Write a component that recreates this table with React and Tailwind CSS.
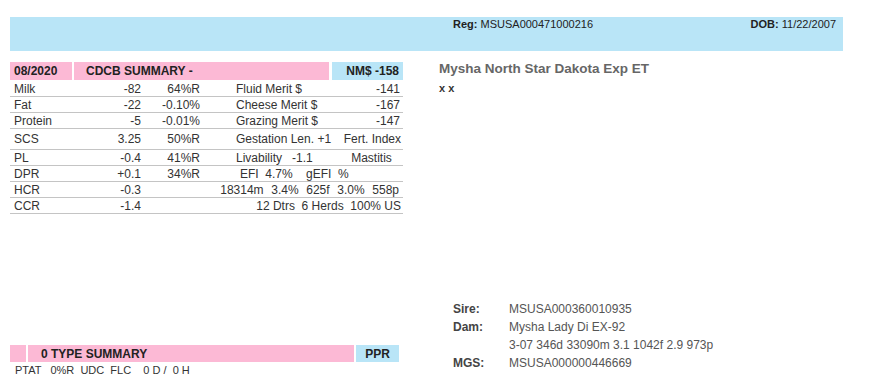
const font = { fontFamily: '"Liberation Sans", Arial, sans-serif' };

const rows = [
  { label: 'Milk', val: '-82', pct: '64%R', name: 'Fluid Merit $', nval: '-141' },
  { label: 'Fat', val: '-22', pct: '-0.10%', name: 'Cheese Merit $', nval: '-167' },
  { label: 'Protein', val: '-5', pct: '-0.01%', name: 'Grazing Merit $', nval: '-147' },
];

function Row({ label, val, pct, children, tall }) {
  return (
    <div
      className={`flex items-center border-b border-[#c4c4c4] ${
        tall ? 'h-[21px]' : 'h-[16px]'
      }`}
    >
      <span className="w-[75px] pl-[4px]">{label}</span>
      <span className="w-[56px] text-right">{val}</span>
      <span className="w-[59px] text-right">{pct}</span>
      {children}
    </div>
  );
}

export default function App() {
  return (
    <div className="w-[878px] h-[376px] bg-white text-[#333] overflow-hidden" style={font}>
      <div className="h-[17px]" />
      <div className="ml-[10px] w-[833px] h-[34px] bg-[#b9e5f7] flex items-start justify-between pl-[443px] pr-[7px] text-[11px] leading-[13px] pt-[1px] text-[#222]">
        <span>
          <b>Reg:</b> MSUSA000471000216
        </span>
        <span>
          <b>DOB:</b> 11/22/2007
        </span>
      </div>

      <div className="flex h-[316px] mt-[11px]">
        {/* left column */}
        <div className="ml-[10px] w-[393px] flex flex-col text-[12px]">
          <div className="flex h-[18px] items-center font-bold text-[#222]">
            <div className="w-[62px] h-full bg-[#fcb9d5] pl-[4px] flex items-center">08/2020</div>
            <div className="ml-[2px] w-[255px] h-full bg-[#fcb9d5] pl-[12px] flex items-center">
              CDCB SUMMARY -
            </div>
            <div className="ml-[3px] flex-1 h-full bg-[#b9e5f7] pr-[4px] flex items-center justify-end">
              NM$ -158
            </div>
          </div>
          <div className="mt-[1px]">
            {rows.map((r) => (
              <Row key={r.label} {...r}>
                <span className="w-[140px] pl-[36px]">{r.name}</span>
                <span className="flex-1 text-right pr-[3px]">{r.nval}</span>
              </Row>
            ))}
            <Row label="SCS" val="3.25" pct="50%R" tall>
              <span className="w-[140px] pl-[36px] whitespace-nowrap">Gestation Len. +1</span>
              <span className="flex-1 text-right pr-[2px] whitespace-nowrap">Fert. Index</span>
            </Row>
            <Row label="PL" val="-0.4" pct="41%R">
              <span className="w-[140px] pl-[36px] whitespace-pre">Livability   -1.1</span>
              <span className="flex-1 text-center">Mastitis</span>
            </Row>
            <Row label="DPR" val="+0.1" pct="34%R">
              <span className="pl-[40px] whitespace-pre">EFI  4.7%    gEFI  %</span>
            </Row>
            <Row label="HCR" val="-0.3" pct="">
              <span className="flex-1 text-right pr-[4px] whitespace-pre [word-spacing:0.5px]">18314m  3.4%  625f  3.0%  558p</span>
            </Row>
            <Row label="CCR" val="-1.4" pct="">
              <span className="flex-1 text-right pr-[2px] whitespace-pre">12 Dtrs  6 Herds  100% US</span>
            </Row>
          </div>

          <div className="mt-auto">
            <div className="flex h-[17px] font-bold text-[#222]">
              <div className="w-[16px] bg-[#fcb9d5]" />
              <div className="ml-[2px] w-[326px] bg-[#fcb9d5] pl-[13px] flex items-center">
                0 TYPE SUMMARY
              </div>
              <div className="ml-[2px] w-[43px] bg-[#b9e5f7] flex items-center justify-center">PPR</div>
            </div>
            <div className="pl-[5px] pt-[1px] text-[11px] whitespace-pre leading-[15px]">
              PTAT   0%R  UDC  FLC    0 D /  0 H
            </div>
          </div>
        </div>

        {/* right column */}
        <div className="ml-[36px] flex-1 flex flex-col">
          <div className="text-[13.5px] font-bold text-[#666] leading-[16px] -mt-[1px]">
            Mysha North Star Dakota Exp ET
          </div>
          <div className="text-[11px] font-bold text-[#333] mt-[3px]">x x</div>

          <div className="mt-auto mb-[6px] ml-[14px] text-[12px] leading-[18px]">
            {[
              ['Sire:', 'MSUSA000360010935'],
              ['Dam:', 'Mysha Lady Di EX-92'],
              ['', '3-07 346d 33090m 3.1 1042f 2.9 973p'],
              ['MGS:', 'MSUSA000000446669'],
            ].map(([k, v], i) => (
              <div key={i} className="flex">
                <span className="w-[56px] font-bold text-[#444]">{k}</span>
                <span className="text-[#555]">{v}</span>
              </div>
            ))}
          </div>
        </div>
      </div>
    </div>
  );
}
